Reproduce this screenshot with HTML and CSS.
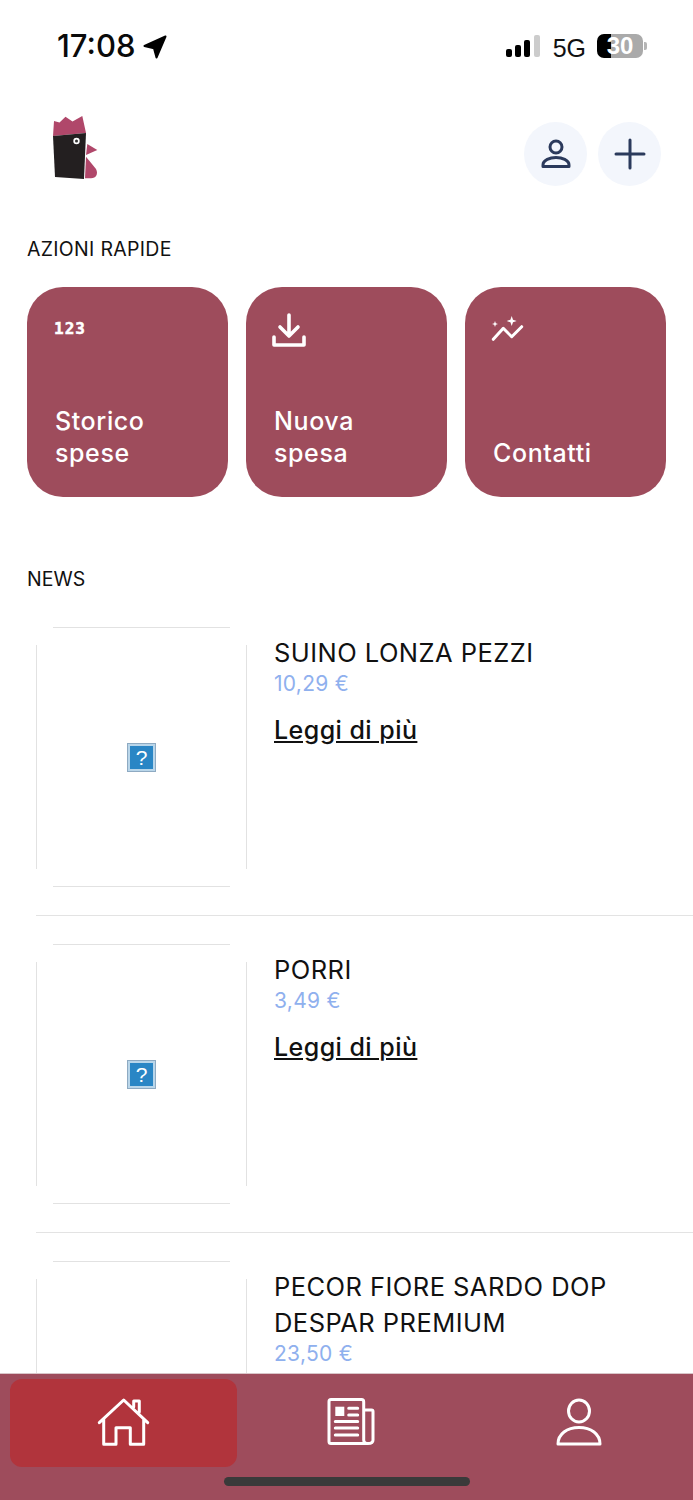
FILE: index.html
```html
<!DOCTYPE html>
<html lang="it">
<head>
<meta charset="utf-8">
<title>Home</title>
<link rel="stylesheet" href="styles.css">
</head>
<body>
<div class="phone">
  <div class="status">
    <div class="status-left">
      <span class="time">17:08</span>
      <svg class="loc" viewBox="0 0 24 24"><path d="M22.500 1.500 1.500 11 11 13.200 13.500 22.500Z" fill="#000" stroke="#000" stroke-width="2" stroke-linejoin="round"/></svg>
    </div>
    <div class="status-right">
      <div class="signal"><i class="b1"></i><i class="b2"></i><i class="b3"></i><i class="b4"></i></div>
      <span class="net">5G</span>
      <div class="battery"><span class="bat-num">30</span></div>
      <i class="bat-tip"></i>
    </div>
  </div>

  <header class="head">
    <svg class="logo" viewBox="0 0 50 70">
      <path d="M4 9 9.500 10.500 15.500 4.700 22.500 9.500 32.300 4 36 21 3 24Z" fill="#b0476a"/>
      <path d="M3 24 36 21 34 67 5 65Z" fill="#231f20"/>
      <circle cx="26.500" cy="29" r="3.200" fill="#fff"/><circle cx="26.500" cy="29" r="1.500" fill="#333"/>
      <path d="M37.300 32 47.300 38 36 43Z" fill="#b0476a"/>
      <path d="M36 44.700 46 57C48.500 62 46 66.300 41 66.300L35 66.300Z" fill="#b0476a"/>
    </svg>
    <div class="head-btns">
      <button class="round" aria-label="Profilo">
        <svg width="34" height="34" viewBox="0 0 34 34" fill="none" stroke="#2b3a5c" stroke-width="3" stroke-linejoin="round"><circle cx="17" cy="10" r="6"/><path d="M4 29.500V28C4 23 11 20.500 17 20.500S30 23 30 28V29.500Z"/></svg>
      </button>
      <button class="round" aria-label="Aggiungi">
        <svg width="34" height="34" viewBox="0 0 34 34" fill="none" stroke="#2b3a5c" stroke-width="3" stroke-linecap="round"><path d="M17 3V31M3 17H31"/></svg>
      </button>
    </div>
  </header>

  <h2 class="section quick-title">AZIONI RAPIDE</h2>
  <div class="cards">
    <a class="card">
      <span class="ico-num">123</span>
      <span class="card-label">Storico<br>spese</span>
    </a>
    <a class="card">
      <svg class="card-ico" viewBox="0 0 36 36" fill="none" stroke="#fff" stroke-width="3.600" stroke-linecap="round" stroke-linejoin="round"><path d="M18 3V24M9 15 18 24 27 15M3 25V33H33V25"/></svg>
      <span class="card-label">Nuova<br>spesa</span>
    </a>
    <a class="card">
      <svg class="card-ico" viewBox="0 0 36 36" fill="none" stroke="#fff" stroke-width="3" stroke-linecap="round" stroke-linejoin="round"><path d="M3.300 27.300 13.300 16.300 21.700 24.700 31.700 14.700"/><path fill="#fff" stroke="none" d="M21.700 4 23 7.700 26.700 9 23 10.300 21.700 14 20.400 10.300 16.700 9 20.400 7.700ZM5 9 5.800 11.200 8 12 5.800 12.800 5 15 4.200 12.800 2 12 4.200 11.200Z"/></svg>
      <span class="card-label">Contatti</span>
    </a>
  </div>

  <h2 class="section news-title">NEWS</h2>
  <div class="news">
    <article class="item">
      <div class="thumb"><span class="broken">?</span></div>
      <div class="info">
        <h3 class="name">SUINO LONZA PEZZI</h3>
        <div class="price">10,29 €</div>
        <a class="more">Leggi di più</a>
      </div>
    </article>
    <article class="item">
      <div class="thumb"><span class="broken">?</span></div>
      <div class="info">
        <h3 class="name">PORRI</h3>
        <div class="price">3,49 €</div>
        <a class="more">Leggi di più</a>
      </div>
    </article>
    <article class="item">
      <div class="thumb"><span class="broken">?</span></div>
      <div class="info">
        <h3 class="name">PECOR FIORE SARDO DOP DESPAR PREMIUM</h3>
        <div class="price">23,50 €</div>
        <a class="more">Leggi di più</a>
      </div>
    </article>
  </div>

  <nav class="tabbar">
    <a class="tab active">
      <svg width="55" height="52" viewBox="0 0 55 52" fill="none" stroke="#fff" stroke-width="3" stroke-linecap="round" stroke-linejoin="round"><path d="M3.300 26.700 27.700 4 51.700 26.700M7.700 23V48.300H20V31.700H34.300V48.300H47.700V23M37.700 11V5H43.300V16"/></svg>
    </a>
    <a class="tab">
      <svg width="48" height="49" viewBox="0 0 48 49" fill="none" stroke="#fff" stroke-width="3" stroke-linecap="round" stroke-linejoin="round"><path d="M4 2.500H34.500Q36.700 2.500 36.700 4.700V43Q36.700 46.500 41 46.500H4Q2 46.500 2 44.500V4.500Q2 2.500 4 2.500ZM36.700 13H44.500Q46 13 46 14.500V43Q46 46.500 41 46.500"/><rect x="8.300" y="9.700" width="9" height="9.300" fill="#fff" stroke="none"/><path d="M21.700 11.300H30.700M21.700 18H30.700M8.300 24.500H30.700M8.300 31H30.700M8.300 38H30.700"/></svg>
    </a>
    <a class="tab">
      <svg width="46" height="48" viewBox="0 0 46 48" fill="none" stroke="#fff" stroke-width="3" stroke-linejoin="round"><ellipse cx="23" cy="13" rx="10.500" ry="11"/><path d="M2 46C2 36 11 29.500 23 29.500S44 36 44 46Z"/></svg>
    </a>
    <i class="indicator"></i>
  </nav>
</div>
</body>
</html>
```

FILE: styles.css
```css
* { box-sizing: border-box; }
html, body { margin: 0; padding: 0; background: #fff; }
body { font-family: "Inter", "Liberation Sans", sans-serif; color: #111; }
.phone { position: relative; width: 693px; height: 1500px; overflow: hidden; background: #fff; }

.status { height: 92px; display: flex; justify-content: space-between; padding: 28px 46px 0 57px; }
.status-left { display: flex; align-items: flex-start; gap: 8px; }
.time { font-size: 31px; line-height: 36px; font-weight: 500; color: #0a0a0a; }
.loc { width: 24px; height: 24px; margin-top: 7px; }
.status-right { display: flex; align-items: flex-start; }
.signal { display: flex; align-items: flex-end; gap: 3px; height: 22px; margin-top: 7px; }
.signal i { display: block; width: 6px; background: #000; border-radius: 2px; }
.signal .b1 { height: 8px; }
.signal .b2 { height: 12px; }
.signal .b3 { height: 17px; }
.signal .b4 { height: 22px; background: #ccc; margin-left: 1px; }
.net { font: 400 25px/30px "Liberation Sans", sans-serif; margin: 5px 11px 0 13px; color: #111; }
.battery { width: 46px; height: 24px; margin-top: 6px; border-radius: 7px; background: linear-gradient(90deg, #000 0 14px, #aaa 14px); display: flex; align-items: center; justify-content: center; }
.bat-num { font: 700 24px/24px "Liberation Sans", sans-serif; color: #fff; }
.bat-tip { width: 3px; height: 8px; margin: 14px 0 0 1px; background: #b5b5b5; border-radius: 0 2px 2px 0; }

.head { height: 138px; padding: 20px 32px 0 50px; display: flex; justify-content: space-between; align-items: flex-start; }
.logo { width: 50px; height: 70px; }
.head-btns { display: flex; gap: 11px; margin-top: 10px; }
.round { width: 63px; height: 64px; padding: 0; border: 0; border-radius: 50%; background: #f3f6fc; display: flex; align-items: center; justify-content: center; }

.section { margin: 0; padding-left: 27px; font-size: 19.500px; line-height: 24px; font-weight: 400; letter-spacing: .3px; color: #111; }
.quick-title { margin-top: 7px; }
.cards { display: flex; gap: 18px; padding: 26px 0 0 27px; }
.card { width: 201px; height: 210px; border-radius: 36px; background: #9e4c5c; color: #fff; padding: 0 20px 28px 28px; display: flex; flex-direction: column; justify-content: space-between; }
.ico-num { font: 700 16px/17px "DejaVu Sans Mono", monospace; letter-spacing: 1px; -webkit-text-stroke: .5px #fff; margin: 33px 0 0 -1px; }
.card-ico { width: 36px; height: 36px; margin: 25px 0 0 -3px; }
.card-label { font-size: 25px; line-height: 32px; font-weight: 500; letter-spacing: .6px; }

.news-title { margin-top: 70px; letter-spacing: 0; }
.news { padding-top: 36px; padding-left: 36px; }
.item { display: flex; gap: 27px; height: 317px; padding-bottom: 29px; position: relative; }
.item::after { content: ""; position: absolute; left: 0; right: 0; top: 288px; height: 1px; background: #e3e3e3; }
.thumb { position: relative; flex: none; width: 211px; height: 260px; display: flex; align-items: center; justify-content: center; }
.thumb::before { content: ""; position: absolute; left: 17px; right: 17px; top: 0; bottom: 0; border-top: 1px solid #e2e2e2; border-bottom: 1px solid #e2e2e2; }
.thumb::after { content: ""; position: absolute; left: 0; right: 0; top: 18px; bottom: 18px; border-left: 1px solid #e2e2e2; border-right: 1px solid #e2e2e2; }
.broken { width: 29px; height: 29px; background: #2a86c5; border: 3px solid #b9d6ea; outline: 1px solid #8eaac2; outline-offset: -1px; color: #fff; font: 400 21px/23px "Liberation Sans", sans-serif; text-align: center; }
.info { flex: 1; min-width: 0; padding-right: 50px; }
.name { margin: 8px 0 0; font-size: 25.500px; line-height: 36px; font-weight: 400; letter-spacing: .45px; color: #111; }
.price { font-size: 21px; line-height: 26px; letter-spacing: .3px; color: #8fb0ee; }
.more { display: block; margin-top: 17px; font-size: 25px; line-height: 32px; font-weight: 500; letter-spacing: .45px; text-decoration: underline; color: #111; }

.tabbar { position: absolute; left: 0; right: 0; bottom: 0; height: 127px; background: #9e4c5c; border-top: 1px solid #d9c5c9; display: flex; padding: 5px 0 0 10px; }
.tab { height: 88px; display: flex; align-items: center; justify-content: center; border-radius: 12px; }
.tab svg { margin-bottom: 3px; }
.tab:nth-child(1) { width: 227px; }
.tab:nth-child(2) { width: 227px; }
.tab:nth-child(3) { width: 229px; }
.tab.active { background: #b1343c; }
.indicator { position: absolute; left: 224px; top: 103px; width: 246px; height: 9px; border-radius: 5px; background: #3a3a3a; }
```
